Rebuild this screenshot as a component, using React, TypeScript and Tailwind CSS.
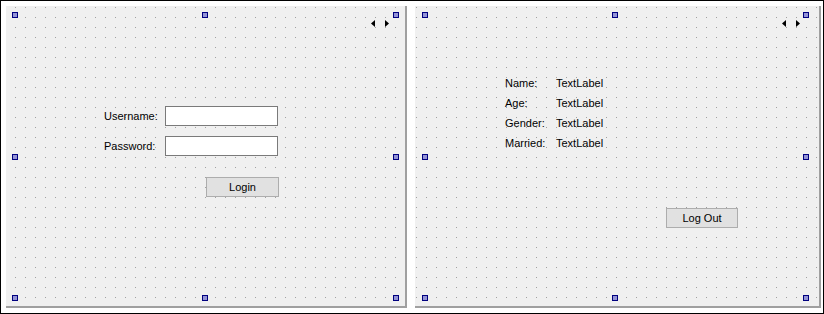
import React from 'react'

const font = { fontFamily: '"Liberation Sans", Arial, sans-serif' }

function Dots({ id, dx }: { id: string; dx: number }) {
  return (
    <svg className="absolute inset-0 pointer-events-none" width="100%" height="100%" shapeRendering="crispEdges">
      <defs>
        <pattern id={id} x={dx} y={0} width={10} height={10} patternUnits="userSpaceOnUse">
          <rect x={0} y={1} width={1} height={1} fill="#a0a0a0" />
        </pattern>
      </defs>
      <rect width="100%" height="100%" fill={`url(#${id})`} />
    </svg>
  )
}

function Handle({ className }: { className: string }) {
  return <div className={`absolute w-[6px] h-[6px] border border-[#000080] bg-[#9494d6] ${className}`} />
}

function Arrows({ className }: { className: string }) {
  return (
    <div className={`absolute top-[14px] flex gap-[10px] ${className}`}>
      <svg width="4" height="7" viewBox="0 0 4 7">
        <polygon points="4,0 0,3.5 4,7" fill="#000" />
      </svg>
      <svg width="4" height="7" viewBox="0 0 4 7">
        <polygon points="0,0 4,3.5 0,7" fill="#000" />
      </svg>
    </div>
  )
}

function Handles({ left, mid, right }: { left: string; mid: string; right: string }) {
  return (
    <>
      <Handle className={`top-[6px] ${left}`} />
      <Handle className={`top-[6px] ${mid}`} />
      <Handle className={`top-[6px] ${right}`} />
      <Handle className={`top-[148px] ${left}`} />
      <Handle className={`top-[148px] ${right}`} />
      <Handle className={`top-[289px] ${left}`} />
      <Handle className={`top-[289px] ${mid}`} />
      <Handle className={`top-[289px] ${right}`} />
    </>
  )
}

export default function App() {
  const rows = ['Name:', 'Age:', 'Gender:', 'Married:']

  return (
    <div className="w-[824px] h-[314px] border border-black bg-white pl-[5px] pr-[2px] py-[5px] flex gap-[8px] text-[11px] text-black" style={font}>
      <div className="relative w-[401px] h-full bg-[#f0f0f0] border-r-2 border-b-2 border-[#a0a0a0] flex flex-col pt-[100px] pl-[98px]">
        <Dots id="dots-left" dx={9} />
        <Handles left="left-[6px]" mid="left-[196px]" right="left-[387px]" />
        <Arrows className="left-[365px]" />

        <div className="relative flex items-center">
          <span className="w-[61px]">Username:</span>
          <div className="w-[113px] h-[20px] bg-white border border-[#7a7a7a]" />
        </div>
        <div className="relative flex items-center mt-[10px]">
          <span className="w-[61px]">Password:</span>
          <div className="w-[113px] h-[20px] bg-white border border-[#7a7a7a]" />
        </div>
        <button className="relative ml-[102px] mt-[21px] w-[73px] h-[20px] bg-[#e1e1e1] border border-[#adadad] flex items-center justify-center">
          Login
        </button>
      </div>

      <div className="relative w-[406px] h-full bg-[#f0f0f0] border-r-2 border-b-2 border-[#a0a0a0] flex flex-col pt-[67px] pl-[90px]">
        <Dots id="dots-right" dx={1} />
        <Handles left="left-[7px]" mid="left-[197px]" right="left-[388px]" />
        <Arrows className="left-[367px]" />

        {rows.map(r => (
          <div key={r} className="relative flex items-center h-[20px]">
            <span className="w-[51px]">{r}</span>
            <span>TextLabel</span>
          </div>
        ))}
        <button className="relative ml-[161px] mt-[55px] w-[72px] h-[20px] bg-[#e1e1e1] border border-[#adadad] flex items-center justify-center">
          Log Out
        </button>
      </div>
    </div>
  )
}
